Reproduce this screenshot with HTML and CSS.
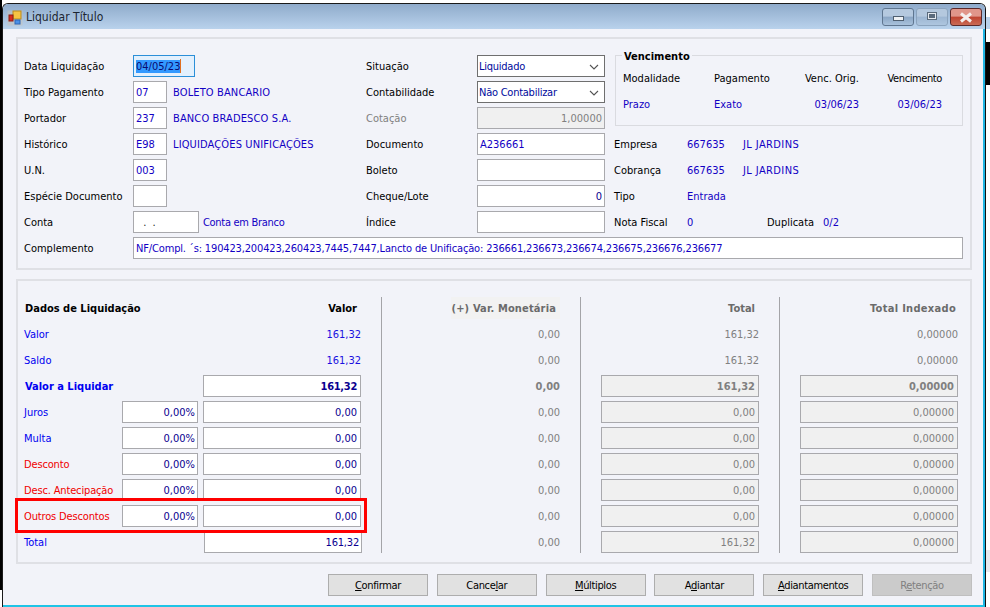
FILE: index.html
```html
<!DOCTYPE html>
<html lang="pt-BR">
<head>
<meta charset="utf-8">
<title>Liquidar Título</title>
<link rel="stylesheet" href="styles.css">
</head>
<body>
<div class="window">
  <header class="titlebar">
    <svg class="app-icon" width="16" height="16" viewBox="0 0 16 16">
      <rect x="0.5" y="0.5" width="15" height="15" fill="#c9c4bc" opacity=".55"/>
      <rect x="6" y="1" width="8" height="8" fill="#f6c343" stroke="#b98a1e"/>
      <rect x="2" y="5" width="4" height="6" fill="#d92b1f" stroke="#8e1c14"/>
      <rect x="8" y="10" width="5" height="4" fill="#4a90e8" stroke="#2d66b5"/>
    </svg>
    <span class="title">Liquidar Título</span>
    <div class="controls">
      <div class="ctl min"><span class="glyph-min"></span></div>
      <div class="ctl max"><span class="glyph-max"></span></div>
      <div class="ctl close">
        <svg width="16" height="11" viewBox="0 0 16 11"><path d="M3 1.5 L13 9.5 M13 1.5 L3 9.5" stroke="#f4efee" stroke-width="3"/></svg>
      </div>
    </div>
  </header>

  <main class="client">
    <section class="panel top">
      <div class="top-cols">
        <div class="col-a">
          <div class="field"><span class="lb">Data Liquidação</span><div class="box date focus"><span class="sel">04/05/23</span><i class="caret"></i></div></div>
          <div class="field"><span class="lb">Tipo Pagamento</span><div class="box code">07</div><span class="val desc">BOLETO BANCARIO</span></div>
          <div class="field"><span class="lb">Portador</span><div class="box code">237</div><span class="val desc">BANCO BRADESCO S.A.</span></div>
          <div class="field"><span class="lb">Histórico</span><div class="box code">E98</div><span class="val desc">LIQUIDAÇÕES UNIFICAÇÕES</span></div>
          <div class="field"><span class="lb">U.N.</span><div class="box code">003</div></div>
          <div class="field"><span class="lb">Espécie Documento</span><div class="box code"></div></div>
          <div class="field"><span class="lb">Conta</span><div class="box conta">&nbsp;.&nbsp;&nbsp;.</div><span class="val desc-near">Conta em Branco</span></div>
        </div>
        <div class="col-b">
          <div class="field"><span class="lb2">Situação</span><div class="box combo">Liquidado<svg class="chev" width="10" height="6" viewBox="0 0 10 6"><path d="M1 1 L5 5 L9 1" fill="none" stroke="#555" stroke-width="1.1"/></svg></div></div>
          <div class="field"><span class="lb2">Contabilidade</span><div class="box combo">Não Contabilizar<svg class="chev" width="10" height="6" viewBox="0 0 10 6"><path d="M1 1 L5 5 L9 1" fill="none" stroke="#555" stroke-width="1.1"/></svg></div></div>
          <div class="field"><span class="lb2 off">Cotação</span><div class="box wide ro right">1,00000</div></div>
          <div class="field"><span class="lb2">Documento</span><div class="box wide">A236661</div></div>
          <div class="field"><span class="lb2">Boleto</span><div class="box wide"></div></div>
          <div class="field"><span class="lb2">Cheque/Lote</span><div class="box wide right dark">0</div></div>
          <div class="field"><span class="lb2">Índice</span><div class="box wide"></div></div>
        </div>
        <div class="col-c">
          <div class="group">
            <span class="legend">Vencimento</span>
            <div class="group-grid">
              <span>Modalidade</span><span>Pagamento</span><span class="r">Venc. Orig.</span><span class="r tight">Vencimento</span>
              <span class="val">Prazo</span><span class="val">Exato</span><span class="val r">03/06/23</span><span class="val r">03/06/23</span>
            </div>
          </div>
          <div class="field"><span class="lb3">Empresa</span><span class="val v1">667635</span><span class="val loose">JL JARDINS</span></div>
          <div class="field"><span class="lb3">Cobrança</span><span class="val v1">667635</span><span class="val loose">JL JARDINS</span></div>
          <div class="field"><span class="lb3">Tipo</span><span class="val">Entrada</span></div>
          <div class="field"><span class="lb3">Nota Fiscal</span><span class="val v2">0</span><span class="lb4">Duplicata</span><span class="val">0/2</span></div>
        </div>
      </div>
      <div class="field"><span class="lb">Complemento</span><div class="box compl">NF/Compl. ´s: 190423,200423,260423,7445,7447,Lancto de Unificação: 236661,236673,236674,236675,236676,236677</div></div>
    </section>

    <section class="panel bottom">
      <div class="col first">
        <div class="cell"><b class="head grow">Dados de Liquidação</b><b class="head head-valor">Valor</b></div>
        <div class="cell"><span class="grow blue">Valor</span><span class="val-light">161,32</span></div>
        <div class="cell"><span class="grow blue">Saldo</span><span class="val-light">161,32</span></div>
        <div class="cell"><b class="grow blue">Valor a Liquidar</b><div class="box amount strong">161,32</div></div>
        <div class="cell"><span class="grow blue">Juros</span><div class="box pct">0,00%</div><div class="box amount">0,00</div></div>
        <div class="cell"><span class="grow blue">Multa</span><div class="box pct">0,00%</div><div class="box amount">0,00</div></div>
        <div class="cell"><span class="grow red">Desconto</span><div class="box pct">0,00%</div><div class="box amount">0,00</div></div>
        <div class="cell"><span class="grow red">Desc. Antecipação</span><div class="box pct">0,00%</div><div class="box amount">0,00</div></div>
        <div class="cell"><span class="grow red">Outros Descontos</span><div class="box pct">0,00%</div><div class="box amount">0,00</div></div>
        <div class="cell"><span class="grow blue">Total</span><div class="box amount total">161,32</div></div>
      </div>
      <div class="col second">
        <div class="cell end"><b class="head-off var">(+) Var. Monetária</b></div>
        <div class="cell end off">0,00</div>
        <div class="cell end off">0,00</div>
        <div class="cell end off"><b>0,00</b></div>
        <div class="cell end off">0,00</div>
        <div class="cell end off">0,00</div>
        <div class="cell end off">0,00</div>
        <div class="cell end off">0,00</div>
        <div class="cell end off">0,00</div>
        <div class="cell end off">0,00</div>
      </div>
      <div class="col third">
        <div class="cell end"><b class="head-off pad4">Total</b></div>
        <div class="cell end off">161,32</div>
        <div class="cell end off">161,32</div>
        <div class="cell"><div class="box fill ro right"><b>161,32</b></div></div>
        <div class="cell"><div class="box fill ro right">0,00</div></div>
        <div class="cell"><div class="box fill ro right">0,00</div></div>
        <div class="cell"><div class="box fill ro right">0,00</div></div>
        <div class="cell"><div class="box fill ro right">0,00</div></div>
        <div class="cell"><div class="box fill ro right">0,00</div></div>
        <div class="cell"><div class="box fill ro right">161,32</div></div>
      </div>
      <div class="col fourth">
        <div class="cell end"><b class="head-off pad2 wider">Total Indexado</b></div>
        <div class="cell end off">0,00000</div>
        <div class="cell end off">0,00000</div>
        <div class="cell"><div class="box fill ro right"><b>0,00000</b></div></div>
        <div class="cell"><div class="box fill ro right">0,00000</div></div>
        <div class="cell"><div class="box fill ro right">0,00000</div></div>
        <div class="cell"><div class="box fill ro right">0,00000</div></div>
        <div class="cell"><div class="box fill ro right">0,00000</div></div>
        <div class="cell"><div class="box fill ro right">0,00000</div></div>
        <div class="cell"><div class="box fill ro right">0,00000</div></div>
      </div>
      <div class="highlight"></div>
    </section>

    <footer class="actions">
      <button class="btn"><u>C</u>onfirmar</button>
      <button class="btn">Cance<u>l</u>ar</button>
      <button class="btn"><u>M</u>últiplos</button>
      <button class="btn">A<u>d</u>iantar</button>
      <button class="btn"><u>A</u>diantamentos</button>
      <button class="btn disabled">R<u>e</u>tenção</button>
    </footer>
  </main>
</div>
</body>
</html>
```

FILE: styles.css
```css
* { box-sizing: border-box; }

html, body { margin: 0; height: 100%; overflow: hidden; }

body {
  position: relative;
  font: 11px/13px "DejaVu Sans Condensed", "DejaVu Sans", sans-serif;
  font-stretch: condensed;
  color: #000;
  background-color: #fff;
  background-image:
    linear-gradient(#000, #000),
    linear-gradient(#b9d1ea, #b9d1ea),
    linear-gradient(#000, #000),
    linear-gradient(#e8e8ee, #e8e8ee),
    linear-gradient(#0a7be0, #0a7be0);
  background-repeat: no-repeat;
  background-size: 2px 590px, 4px 12px, 4px 43px, 4px 22px, 4px 2px;
  background-position: 0 0, 986px 17px, 986px 42px, 986px 550px, 986px 560px;
}

.window {
  position: absolute;
  left: 2px;
  top: 3px;
  width: 984px;
  height: 604px;
  display: flex;
  flex-direction: column;
  border-top: 1px solid #1a1a1a;
  border-left: 1px solid #1a1a1a;
  border-right: 1px solid #111;
  border-radius: 6px 6px 0 0;
  overflow: hidden;
  background: #f2f3f9;
}

.titlebar {
  height: 25px;
  flex: none;
  display: flex;
  align-items: center;
  padding: 2px 3px 0 4px;
  background: linear-gradient(#8fabcb, #b9d2ec);
}

.app-icon { flex: none; }

.title {
  margin-left: 3px;
  font-size: 12px;
  color: #1c2530;
}

.controls {
  margin-left: auto;
  align-self: flex-start;
  margin-top: 2px;
  display: flex;
  gap: 2px;
}

.ctl {
  width: 32px;
  height: 18px;
  display: flex;
  align-items: center;
  justify-content: center;
  border: 1px solid #5f7690;
  border-radius: 3px;
  background: linear-gradient(#b5c9df 0 45%, #8ba6c5 50%, #a9c2dc);
}

.ctl.max {
  border-color: #8ba3bd;
  background: linear-gradient(#b4c8de 0 45%, #9db6d2 50%, #aec6df);
}

.ctl.close {
  border-color: #5c2a2a;
  background: linear-gradient(#e0968a 0 45%, #bf4431 50%, #c96a55);
}

.glyph-min {
  width: 11px;
  height: 5px;
  margin-top: 3px;
  background: #eef1f4;
  border: 1px solid #4f5f70;
}

.glyph-max {
  width: 10px;
  height: 8px;
  margin-top: -2px;
  border: 1px solid #5b6b7c;
  background: #e4e9ef;
  box-shadow: inset 0 0 0 1px #e4e9ef, inset 0 0 0 3px #5b6b7c;
}

.client {
  flex: 1;
  display: flex;
  flex-direction: column;
  padding: 8px 11px 0 13px;
  border-right: 2px solid #1fb4e2;
  border-bottom: 2px solid #1fc4e6;
}

.panel { border: 2px solid #dfe0e5; }

.top {
  height: 233px;
  padding: 16px 7px 0 6px;
}

.top-cols { display: flex; }

.col-a, .col-b {
  display: flex;
  flex-direction: column;
  gap: 4px;
}

.col-a { width: 342px; }
.col-b { width: 248px; }

.col-c {
  display: flex;
  flex-direction: column;
  gap: 4px;
  width: 349px;
}

.field {
  display: flex;
  align-items: center;
  height: 22px;
}

.top > .field { margin-top: 4px; }

.lb { width: 109px; flex: none; }
.lb2 { width: 111px; flex: none; }
.lb3 { width: 73px; flex: none; }
.lb4 { width: 56px; flex: none; }
.off, .lb2.off { color: #808080; }

.val { color: #1200c4; }
.desc { margin-left: 6px; letter-spacing: .13px; }
.desc-near { margin-left: 4px; letter-spacing: -.3px; }
.v1 { width: 56px; flex: none; }
.v2 { width: 80px; flex: none; }
.loose { letter-spacing: .4px; }
.tight { letter-spacing: -.4px; }

.box {
  height: 22px;
  flex: none;
  display: flex;
  align-items: center;
  position: relative;
  padding: 0 2px;
  background: #fff;
  border: 1px solid #a9a9ad;
  color: #1200c4;
  white-space: nowrap;
  overflow: hidden;
}

.code { width: 34px; }
.conta { width: 66px; padding-left: 6px; color: #222; }
.wide { width: 128px; }
.right { justify-content: flex-end; }
.dark { color: #0a0090; }
.box.ro { background: #f0f0f0; color: #808080; }

.date { width: 62px; }

.focus {
  border-color: #2b8fd8;
  background: #e3f0fd;
}

.sel { background: #3399ff; color: #0a0a70; }

.caret { width: 1px; height: 14px; background: #e07020; }

.combo {
  width: 128px;
  padding-left: 1px;
  letter-spacing: -.25px;
  border-color: #6f6f6f;
  color: #000a9c;
}

.chev { position: absolute; right: 5px; top: 8px; }

.compl { width: 830px; letter-spacing: -.15px; }

.group {
  position: relative;
  height: 71px;
  margin: 0 0 3px 1px;
  padding: 11px 0 0 7px;
  border: 1px solid #dadbe0;
}

.legend {
  position: absolute;
  left: 6px;
  top: -6px;
  padding: 0 2px;
  font-weight: bold;
  background: #f2f3f9;
}

.group-grid {
  display: grid;
  grid-template-columns: 91px 86px 59px 83px;
  grid-auto-rows: 22px;
  row-gap: 4px;
  align-items: center;
}

.r { text-align: right; }

.bottom {
  height: 285px;
  flex: none;
  margin-top: 9px;
  padding: 16px 0 0;
  display: flex;
  position: relative;
}

.col {
  display: flex;
  flex: none;
  flex-direction: column;
  gap: 4px;
  height: 256px;
}

.col + .col { border-left: 1px solid #a4a4a8; }

.first { width: 363px; padding: 0 20px 0 6px; }
.second { width: 199px; padding-right: 20px; }
.third { width: 199px; padding: 0 20px; }
.fourth { width: 191px; padding: 0 12px 0 20px; }

.cell {
  height: 22px;
  flex: none;
  display: flex;
  align-items: center;
}

.end { justify-content: flex-end; }

.grow { flex: 1; }
b.grow { margin-left: 1px; }
.blue { color: #0000f0; }
.red { color: #f00000; letter-spacing: -.15px; }

.head { color: #000; }
.head-valor { margin-right: 4px; }

.head-off { color: #6b6b6b; }
.var {
  display: flex;
  align-items: center;
  height: 22px;
  padding: 0 4px 0 1px;
  letter-spacing: .15px;
  background: #f2f2f2;
}
.pad4 { margin-right: 4px; }
.pad2 { margin-right: 2px; }
.wider { letter-spacing: .3px; }

.val-light { color: #1a10e0; }

.pct {
  width: 76px;
  margin-right: 5px;
  justify-content: flex-end;
  color: #0a0090;
}

.amount {
  width: 158px;
  justify-content: flex-end;
  padding-right: 3px;
  color: #0a0090;
}

.strong { font-weight: bold; letter-spacing: -.3px; }

.total { margin-right: -1px; padding-right: 2px; letter-spacing: -.2px; }

.fill { width: 158px; padding-right: 3px; }

.highlight {
  position: absolute;
  left: -3px;
  top: 217px;
  width: 352px;
  height: 35px;
  border: 3px solid #f00;
}

.actions {
  display: flex;
  justify-content: flex-end;
  gap: 8.8px;
  margin-top: 10px;
}

.btn {
  width: 100px;
  height: 22px;
  padding: 0;
  font: inherit;
  letter-spacing: -.35px;
  color: #000;
  background: #e1e1e1;
  border: 1px solid #adadad;
}

.btn.disabled {
  background: #cbcbcb;
  color: #808080;
  border-color: #bfbfbf;
}
```
